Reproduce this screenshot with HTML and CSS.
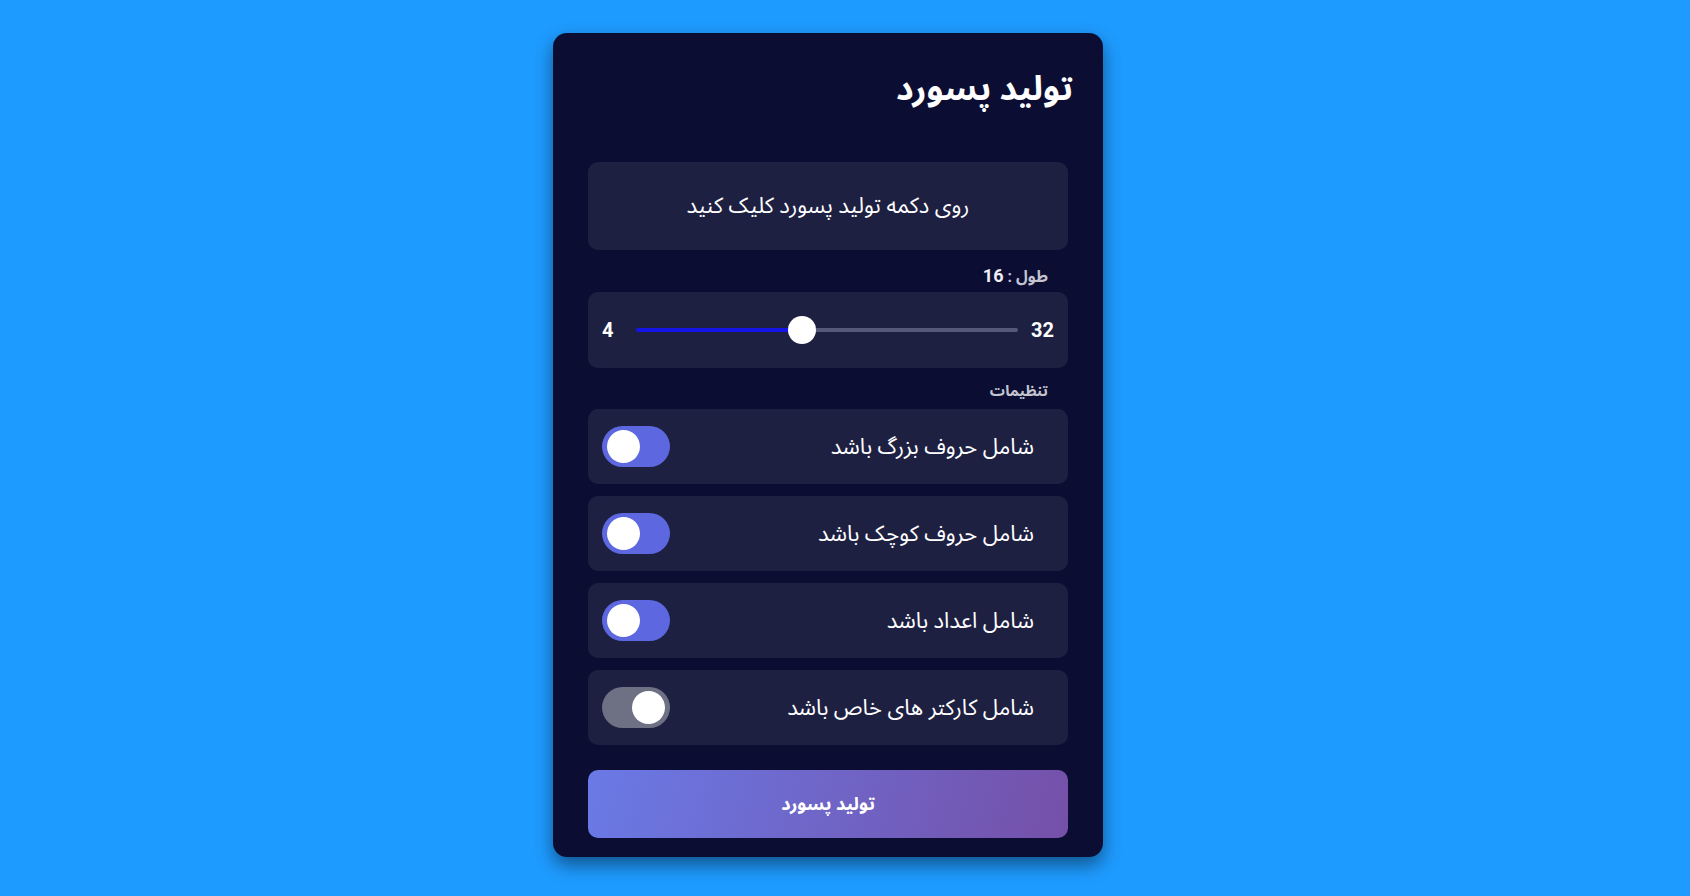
FILE: index.html
```html
<!DOCTYPE html>
<html lang="fa">
<head>
<meta charset="utf-8">
<title>تولید پسورد</title>
<link rel="stylesheet" href="styles.css">
</head>
<body>
<main class="card" dir="rtl">
  <h1 class="title">تولید پسورد</h1>
  <div class="output">روی دکمه تولید پسورد کلیک کنید</div>
  <div class="label">طول : <span class="num">16</span></div>
  <div class="slider-box">
    <span class="bound">4</span>
    <input class="range" type="range" min="4" max="32" value="16" style="--fill: 43.2%">
    <span class="bound">32</span>
  </div>
  <div class="label settings">تنظیمات</div>
  <div class="options">
    <div class="option">
      <span class="option-text">شامل حروف بزرگ باشد</span>
      <span class="toggle on"><span class="knob"></span></span>
    </div>
    <div class="option">
      <span class="option-text">شامل حروف کوچک باشد</span>
      <span class="toggle on"><span class="knob"></span></span>
    </div>
    <div class="option">
      <span class="option-text">شامل اعداد باشد</span>
      <span class="toggle on"><span class="knob"></span></span>
    </div>
    <div class="option">
      <span class="option-text">شامل کارکتر های خاص باشد</span>
      <span class="toggle"><span class="knob"></span></span>
    </div>
  </div>
  <button class="generate" type="button">تولید پسورد</button>
</main>
</body>
</html>
```

FILE: styles.css
```css
* { box-sizing: border-box; }

html, body { height: 100%; }

body {
  margin: 0;
  background: #1e9bff;
  display: flex;
  justify-content: center;
  align-items: flex-start;
  padding: 33px 34px 0 0;
  font-family: Roboto, "Noto Sans Arabic", "DejaVu Sans", sans-serif;
  color: #ffffff;
  overflow: hidden;
}

.card {
  width: 550px;
  background: #0b0e32;
  border-radius: 14px;
  padding: 20px 35px 19px;
  box-shadow: 0 8px 18px rgba(0, 0, 0, 0.45);
  display: flex;
  flex-direction: column;
}

.title {
  margin: 0 -5px 39px 0;
  height: 70px;
  line-height: 70px;
  font-size: 34px;
  font-weight: 700;
  color: #ffffff;
}

.output {
  height: 88px;
  background: #1e2042;
  border-radius: 10px;
  display: flex;
  align-items: center;
  justify-content: center;
  font-size: 22px;
  color: #ffffff;
}

.label {
  margin: 14px 0 4px;
  padding: 0 20px;
  height: 24px;
  line-height: 24px;
  font-size: 16px;
  font-weight: 700;
  color: #c3c4d0;
}

.label .num {
  font-size: 18px;
  color: #eeeef3;
}

.settings {
  margin: 12px 0 7px;
  height: 22px;
  line-height: 22px;
  font-size: 15px;
}

.slider-box {
  direction: ltr;
  height: 76px;
  background: #1e2042;
  border-radius: 10px;
  display: flex;
  align-items: center;
  padding: 0 14px;
}

.bound {
  font-size: 20px;
  font-weight: 700;
  color: #ffffff;
}

.range {
  -webkit-appearance: none;
  appearance: none;
  flex: 1;
  margin: 0 13px 0 23px;
  height: 28px;
  background: transparent;
}

.range::-webkit-slider-runnable-track {
  height: 4px;
  border-radius: 2px;
  background: linear-gradient(to right, #1414e6 0, #1414e6 var(--fill), #56587a var(--fill), #56587a 100%);
}

.range::-webkit-slider-thumb {
  -webkit-appearance: none;
  appearance: none;
  width: 28px;
  height: 28px;
  margin-top: -12px;
  border-radius: 50%;
  background: #ffffff;
  border: none;
}

.options {
  display: flex;
  flex-direction: column;
  gap: 12px;
}

.option {
  height: 75px;
  background: #1e2042;
  border-radius: 10px;
  display: flex;
  align-items: center;
  justify-content: space-between;
  padding: 0 34px 0 14px;
}

.option-text {
  font-size: 22px;
  color: #ffffff;
}

.toggle {
  width: 68px;
  height: 41px;
  border-radius: 21px;
  background: #6e7084;
  display: flex;
  align-items: center;
  padding: 0 5px;
  justify-content: flex-start;
}

.toggle.on {
  background: #5d68e0;
  justify-content: flex-end;
}

.knob {
  width: 33px;
  height: 33px;
  border-radius: 50%;
  background: #ffffff;
}

.generate {
  margin-top: 25px;
  height: 68px;
  border: none;
  border-radius: 10px;
  background: linear-gradient(105deg, #6a7ae6 0%, #7550a8 100%);
  color: #ffffff;
  font-family: inherit;
  font-size: 18px;
  font-weight: 700;
  cursor: pointer;
}
```
